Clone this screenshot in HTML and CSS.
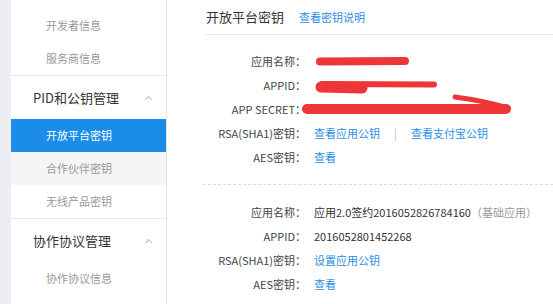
FILE: index.html
```html
<!DOCTYPE html>
<html>
<head>
<meta charset="utf-8">
<title>开放平台密钥</title>
<link rel="stylesheet" href="styles.css">
</head>
<body>
<div class="page">

<div class="sidebar">
  <div class="group first">
    <div class="item">开发者信息</div>
    <div class="item">服务商信息</div>
  </div>
  <div class="group">
    <div class="group-title">PID和公钥管理<span class="chev"></span></div>
    <div class="item active">开放平台密钥</div>
    <div class="item hover">合作伙伴密钥</div>
    <div class="item">无线产品密钥</div>
  </div>
  <div class="group last">
    <div class="group-title">协作协议管理<span class="chev"></span></div>
    <div class="item">协作协议信息</div>
  </div>
</div>

<div class="main">
  <div class="title">开放平台密钥<a class="link title-link">查看密钥说明</a></div>

  <div class="block">
    <div class="row"><span class="label">应用名称：</span><span class="value"></span></div>
    <div class="row"><span class="label">APPID：</span><span class="value"></span></div>
    <div class="row"><span class="label">APP SECRET：</span><span class="value"></span></div>
    <div class="row"><span class="label">RSA(SHA1)密钥：</span><span class="value"><a class="link">查看应用公钥</a><span class="sep">|</span><a class="link">查看支付宝公钥</a></span></div>
    <div class="row"><span class="label">AES密钥：</span><span class="value"><a class="link">查看</a></span></div>
  </div>

  <div class="block dashed">
    <div class="row"><span class="label">应用名称：</span><span class="value">应用2.0签约2016052826784160<span class="muted">（基础应用）</span></span></div>
    <div class="row"><span class="label">APPID：</span><span class="value">2016052801452268</span></div>
    <div class="row"><span class="label">RSA(SHA1)密钥：</span><span class="value"><a class="link">设置应用公钥</a></span></div>
    <div class="row"><span class="label">AES密钥：</span><span class="value"><a class="link">查看</a></span></div>
  </div>
</div>

<!-- red marker over the hidden values -->
<svg class="redact" width="553" height="304" viewBox="0 0 553 304">
  <g fill="none" stroke="#ee3538" stroke-linecap="round">
    <path d="M320 61.5 L405 61" stroke-width="8"/>
    <path d="M321 87 L362 88" stroke-width="11"/>
    <path d="M322 84 L434 84.5" stroke-width="6"/>
    <path d="M307 109 L506 109" stroke-width="10"/>
    <path d="M455 97 Q485 101 508 108" stroke-width="5"/>
  </g>
</svg>

</div>
</body>
</html>
```

FILE: styles.css
```css
body { margin: 0; background: #fff; font-family: "Noto Sans CJK SC", "Noto Sans", sans-serif; }
a { text-decoration: none; cursor: pointer; }

.page { position: relative; display: flex; width: 553px; height: 304px; overflow: hidden; background: #eceef2; }

.sidebar { margin-left: 11px; width: 155px; flex-shrink: 0; background: #fff; border-right: 1px solid #e4e4e4; }
.group { border-bottom: 1px solid #e8e8e8; }
.group.first { padding-top: 9px; }
.group.last { border-bottom: none; }
.group-title { display: flex; align-items: center; justify-content: space-between; height: 43px;
  padding: 0 15px 0 22px; font-size: 13px; color: #333; }
.chev { width: 4px; height: 4px; margin-top: 3px; border-left: 1px solid #bbb; border-top: 1px solid #bbb; transform: rotate(45deg); }
.item { height: 33px; line-height: 33px; padding-left: 35px; font-size: 11px; color: #999; }
.item.active { background: #1b8de9; color: #fff; }
.item.hover { background: #f5f5f5; }

.main { flex: 1; background: #fff; padding-left: 38px; }
.title { height: 34px; line-height: 34px; border-bottom: 1px solid #e8e8e8; padding-left: 1px; font-size: 13px; color: #333; }
.title-link { margin-left: 15px; font-size: 11px; }
.link { color: #2d8ee6; }

.block { padding: 14px 0 15px; }
.block.dashed { border-top: 1px dashed #dcdcdc; padding-top: 15px; margin-left: -2px; padding-left: 2px; }
.row { display: grid; grid-template-columns: 101px 1fr; height: 24px; line-height: 24px; font-size: 11px; }
.label { text-align: right; color: #444; }
.value { padding-left: 8px; color: #333; white-space: nowrap; }
.muted { color: #999; }
.sep { margin: 0 14px; color: #bbb; }

.redact { position: absolute; left: 0; top: 0; }
```
